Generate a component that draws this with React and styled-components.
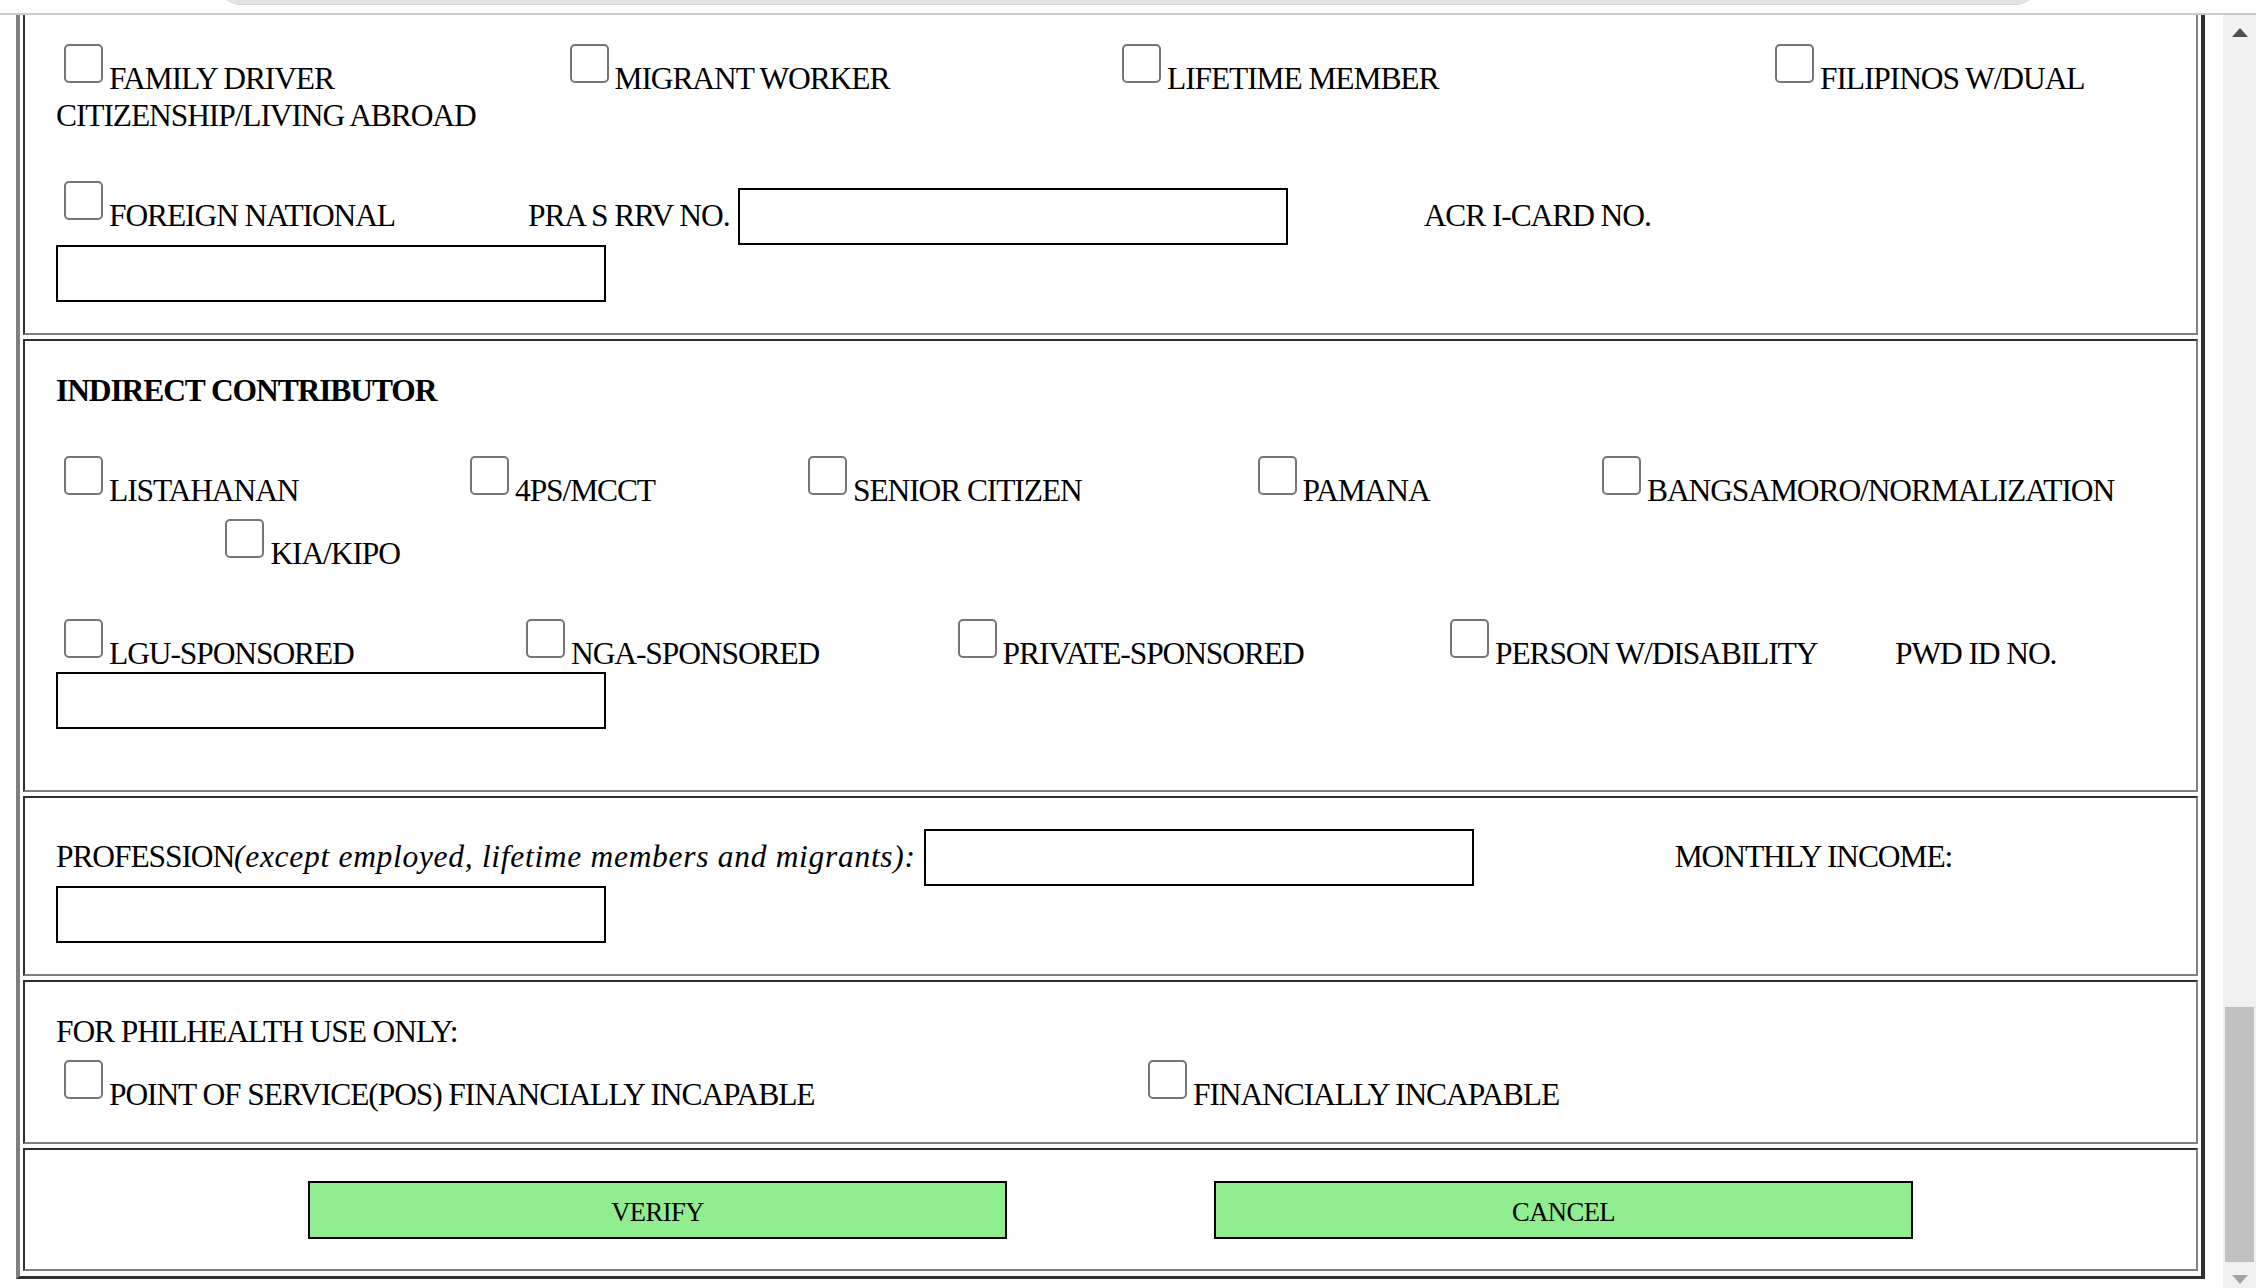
import React from 'react'
import styled, { createGlobalStyle } from 'styled-components'

const Option = ({ w, ml, children }) => (
  <OptionLabel $w={w} $ml={ml}>
    <Check type="checkbox" />
    {children}
  </OptionLabel>
)

const App = () => (
  <Page>
    <GlobalStyle />
    <Header>
      <Pill />
    </Header>

    <Body>
      <Main>
        <Frame>
          <Section $first $pad="19px 31px 31px">
            <Option w={505.5}>FAMILY DRIVER</Option>
            <Option w={552.5}>MIGRANT WORKER</Option>
            <Option w={653}>LIFETIME MEMBER</Option>
            <Option>FILIPINOS W/DUAL</Option>
            <br />
            CITIZENSHIP/LIVING ABROAD
            <br />
            <br />
            <Option w={472}>FOREIGN NATIONAL</Option>
            <Caption $w={209.7}>PRA S RRV NO.</Caption>
            <TextBox type="text" />
            <Caption $ml={136}>ACR I-CARD NO.</Caption>
            <br />
            <TextBox type="text" />
          </Section>

          <Section $pad="31px 31px 61px">
            <Heading>INDIRECT CONTRIBUTOR</Heading>
            <br />
            <br />
            <Option w={406}>LISTAHANAN</Option>
            <Option w={338}>4PS/MCCT</Option>
            <Option w={449.5}>SENIOR CITIZEN</Option>
            <Option w={344.5}>PAMANA</Option>
            <Option>BANGSAMORO/NORMALIZATION</Option>
            <br />
            <Option ml={161.4}>KIA/KIPO</Option>
            <br />
            <br />
            <Option w={462}>LGU-SPONSORED</Option>
            <Option w={431.6}>NGA-SPONSORED</Option>
            <Option w={492.4}>PRIVATE-SPONSORED</Option>
            <Option w={453}>PERSON W/DISABILITY</Option>
            <Caption>PWD ID NO.</Caption>
            <br />
            <TextBox type="text" />
          </Section>

          <Section $pad="31px 31px 31px">
            <Caption $w={867.7}>
              PROFESSION<Note>(except employed, lifetime members and migrants):</Note>
            </Caption>
            <TextBox type="text" />
            <Caption $ml={201}>MONTHLY INCOME:</Caption>
            <br />
            <TextBox type="text" />
          </Section>

          <Section $pad="31px 31px 29px">
            FOR PHILHEALTH USE ONLY:
            <br />
            <Option w={1084}>POINT OF SERVICE(POS) FINANCIALLY INCAPABLE</Option>
            <Option>FINANCIALLY INCAPABLE</Option>
          </Section>

          <Section $pad="31px 31px 30px">
            <Actions>
              <Button type="button">VERIFY</Button>
              <Button type="button">CANCEL</Button>
            </Actions>
          </Section>
        </Frame>
      </Main>

      <Scrollbar>
        <ArrowButton>
          <Arrow $up />
        </ArrowButton>
        <Track>
          <Thumb />
        </Track>
        <ArrowButton>
          <Arrow />
        </ArrowButton>
      </Scrollbar>
    </Body>
  </Page>
)

const GlobalStyle = createGlobalStyle`
  html, body {
    margin: 0;
    padding: 0;
    background: #fff;
  }

  body {
    font-family: "Liberation Serif", "Times New Roman", serif;
    color: #000;
  }
`

const Page = styled.div`
  height: 1288px;
  overflow: hidden;
  display: flex;
  flex-direction: column;
`

const Header = styled.div`
  flex: none;
  height: 13px;
  border-bottom: 2px solid #cbcbcb;
  overflow: hidden;
  padding-left: 220px;
`

const Pill = styled.div`
  width: 1816px;
  height: 40px;
  margin-top: -35px;
  box-sizing: border-box;
  background: #e4e4e4;
  border: 1px solid #d9d9d9;
  border-radius: 20px;
`

const Body = styled.div`
  display: flex;
  align-items: flex-start;
`

const Main = styled.div`
  flex: 1;
  padding: 0 18px 0 16px;
`

const Frame = styled.div`
  display: flex;
  flex-direction: column;
  gap: 4px;
  padding: 0 3px 5px;
  border-left: 4px solid #808080;
  border-right: 4px solid #303030;
  border-bottom: 3px solid #303030;
`

const Section = styled.div`
  padding: ${p => p.$pad};
  border: 2px solid;
  border-color: #303030 #808080 #808080 #303030;
  border-top-width: ${p => (p.$first ? '0' : '2px')};
  font-size: 31.5px;
  line-height: 37px;
  letter-spacing: -1.1px;
`

const OptionLabel = styled.label`
  display: inline-block;
  white-space: nowrap;
  width: ${p => (p.$w ? `${p.$w}px` : 'auto')};
  margin-left: ${p => (p.$ml ? `${p.$ml}px` : '0')};
`

const Check = styled.input`
  appearance: none;
  box-sizing: border-box;
  width: 39px;
  height: 39px;
  margin: 10px 6px 6px 8px;
  vertical-align: baseline;
  background: #fff;
  border: 2px solid #767676;
  border-radius: 5px;
`

const Caption = styled.span`
  display: inline-block;
  white-space: nowrap;
  width: ${p => (p.$w ? `${p.$w}px` : 'auto')};
  margin-left: ${p => (p.$ml ? `${p.$ml}px` : '0')};
`

const Note = styled.em`
  font-style: italic;
  letter-spacing: 0.7px;
`

const Heading = styled.b`
  font-weight: 700;
`

const TextBox = styled.input`
  box-sizing: border-box;
  width: 550px;
  height: 57px;
  margin: 0;
  padding: 0 4px;
  border: 2px solid #000;
  border-radius: 0;
  background: #fff;
  font: inherit;
  vertical-align: baseline;
`

const Actions = styled.div`
  display: flex;
  justify-content: center;
  gap: 207px;
`

const Button = styled.button`
  box-sizing: border-box;
  width: 699px;
  height: 58px;
  padding: 5px 0 0;
  background: #90ee90;
  border: 2px solid #000;
  border-radius: 0;
  color: #000;
  font-family: "Liberation Serif", "Times New Roman", serif;
  font-size: 26.67px;
  letter-spacing: -0.6px;
`

const Scrollbar = styled.div`
  flex: none;
  width: 33px;
  height: 1281px;
  background: #f1f1f1;
  display: flex;
  flex-direction: column;
`

const ArrowButton = styled.div`
  flex: none;
  height: 34px;
  display: flex;
  align-items: center;
  justify-content: center;
`

const Arrow = styled.span`
  width: 0;
  height: 0;
  border-left: 8px solid transparent;
  border-right: 8px solid transparent;
  ${p =>
    p.$up
      ? 'border-bottom: 9px solid #505050;'
      : 'border-top: 9px solid #a3a3a3;'}
`

const Track = styled.div`
  flex: 1;
  display: flex;
  flex-direction: column;
  justify-content: flex-end;
  padding: 0 2px;
`

const Thumb = styled.div`
  height: 255px;
  background: #c1c1c1;
`

export default App
